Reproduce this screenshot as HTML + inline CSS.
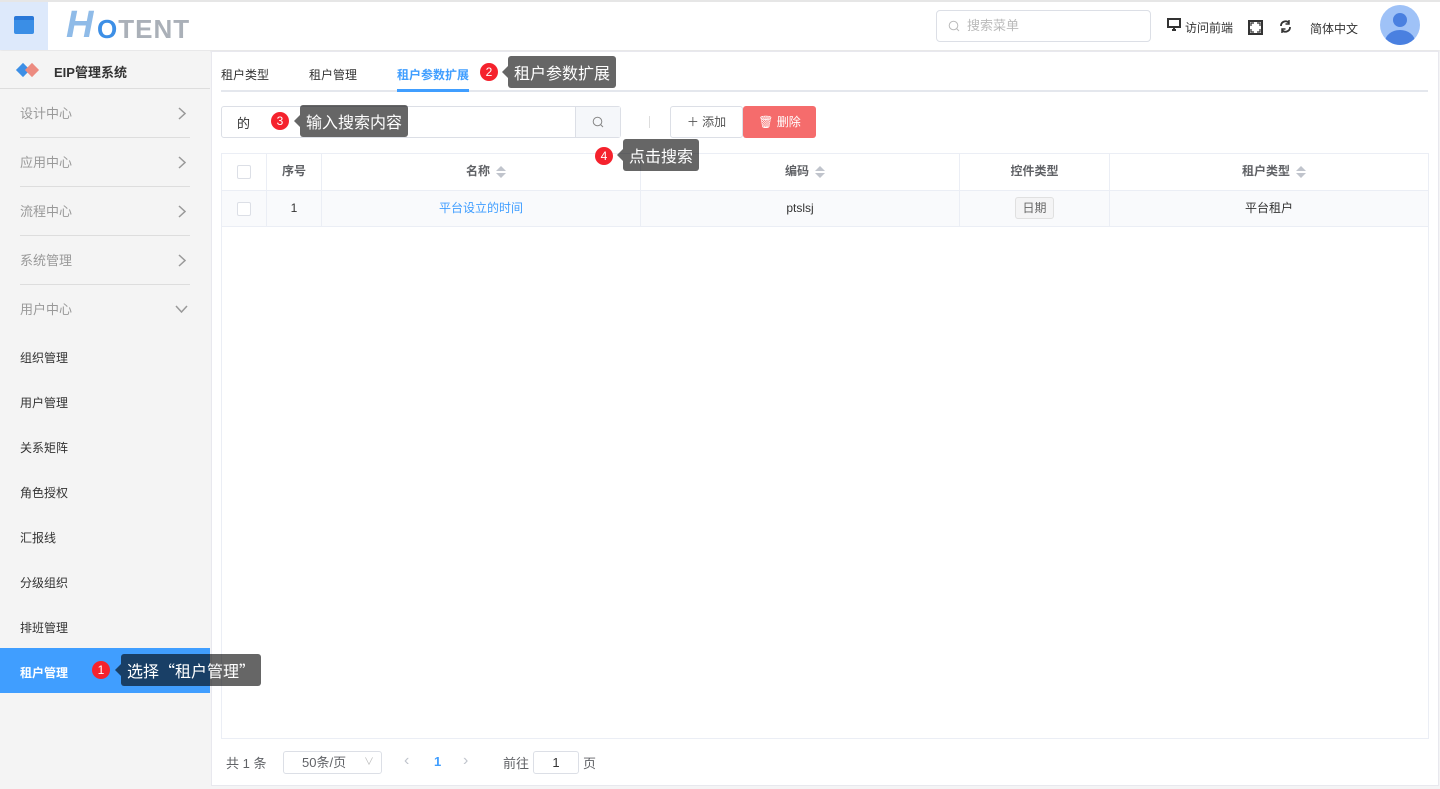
<!DOCTYPE html>
<html><head><meta charset="utf-8"><style>
*{box-sizing:border-box;margin:0;padding:0}
body{width:1440px;height:789px;overflow:hidden;background:#f4f4f5;font-family:"Liberation Sans","Noto Sans CJK SC",sans-serif;font-size:12px;color:#333;position:relative}
.abs{position:absolute}
.hdr{left:0;top:0;width:1440px;height:50px;background:#fff;border-top:2px solid #e6e6e6;box-shadow:0 1px 3px rgba(0,0,0,.08)}
.side{left:0;top:51px;width:210px;height:738px;background:#f4f4f4}
.mi{position:absolute;left:20px;width:170px;height:49px;border-bottom:1px solid #ddd;color:#999;font-size:13px;line-height:49px}
.mi svg{position:absolute;right:4px;top:18px}
.si{position:absolute;left:20px;font-size:12px;color:#333}
.card{left:211px;top:51px;width:1228px;height:735px;background:#fff;border:1px solid #e8e8ee}
.tip{background:rgba(0,0,0,.6);color:#fff;font-family:"Noto Sans CJK SC",sans-serif;font-size:16px;height:32px;line-height:32px;padding:0 6px;border-radius:3px;white-space:nowrap}
.tip:before{content:"";position:absolute;left:-6px;top:10px;border:6px solid transparent;border-left:0;border-right-color:rgba(0,0,0,.6)}
.badge{width:18px;height:18px;border-radius:50%;background:#f5222d;color:#fff;font-size:12px;text-align:center;line-height:18px}
.th{position:absolute;top:153px;height:37px;line-height:37px;text-align:center;font-weight:bold;color:#606266;border-right:1px solid #ebeef5}
.td{position:absolute;top:190px;height:37px;line-height:37px;text-align:center;color:#333;border-right:1px solid #ebeef5}
.sort{display:inline-block;vertical-align:middle;margin-left:6px;width:0;height:12px;position:relative}
.sort:before{content:"";position:absolute;left:0;top:0;border:5px solid transparent;border-top:0;border-bottom-color:#c0c4cc}
.sort:after{content:"";position:absolute;left:0;top:7px;border:5px solid transparent;border-bottom:0;border-top-color:#c0c4cc}
</style></head><body>
<div class="abs hdr">
 <div class="abs" style="left:0;top:0;width:48px;height:48px;background:#dde9fb"></div>
 <div class="abs" style="left:14px;top:14px;width:20px;height:18px;background:#3a8ee6;border-radius:2px;border-top:4px solid #2a78d8"></div>
 <div class="abs" style="left:66px;top:4px;font-size:38px;font-weight:bold;color:#8fbbe8;font-style:italic;line-height:38px">H</div>
 <div class="abs" style="left:97px;top:12px;font-size:26px;font-weight:bold;line-height:30px;letter-spacing:1px"><span style="color:#3d8fe6">O</span><span style="color:#aab0b8">TENT</span></div>
 <div class="abs" style="left:936px;top:8px;width:215px;height:32px;border:1px solid #dcdfe6;border-radius:4px;color:#bbb;font-size:13px;line-height:30px;padding-left:30px">搜索菜单
  <svg class="abs" style="left:11px;top:9px" width="12" height="12" viewBox="0 0 12 12"><circle cx="5.5" cy="5.5" r="4.3" fill="none" stroke="#bbb"/><path d="M8.6 8.6l2.4 2.4" stroke="#bbb"/></svg></div>
 <svg class="abs" style="left:1167px;top:16px" width="14" height="13" viewBox="0 0 14 13"><rect x="1" y="1" width="12" height="8" fill="none" stroke="#333" stroke-width="2"/><path d="M5 12h4M7 9v3" stroke="#333" stroke-width="2"/></svg>
 <div class="abs" style="left:1185px;top:17px;font-size:12px">访问前端</div>
 <svg class="abs" style="left:1248px;top:18px" width="15" height="15" viewBox="0 0 15 15"><rect x="1" y="1" width="13" height="13" fill="none" stroke="#333" stroke-width="2"/><path d="M3 6V3h3M9 3h3v3M12 9v3H9M6 12H3V9" fill="none" stroke="#333" stroke-width="1.2"/></svg>
 <svg class="abs" style="left:1279px;top:18px" width="13" height="13" viewBox="0 0 13 13"><path d="M2 6a4.5 4.5 0 0 1 8-3M11 7a4.5 4.5 0 0 1-8 3" fill="none" stroke="#333" stroke-width="1.8"/><path d="M10 0v4H6.5M3 13V9h3.5" fill="none" stroke="#333" stroke-width="1.5"/></svg>
 <div class="abs" style="left:1310px;top:18px;font-size:12px">简体中文</div>
 <div class="abs" style="left:1380px;top:3px;width:40px;height:40px;border-radius:50%;background:#9fc2f7;overflow:hidden">
  <div class="abs" style="left:13px;top:8px;width:14px;height:14px;border-radius:50%;background:#4a80e0"></div>
  <div class="abs" style="left:5px;top:25px;width:30px;height:24px;border-radius:50%;background:#4a80e0"></div></div>
</div>
<div class="abs side">
 <div class="abs" style="left:18px;top:14px;width:10px;height:10px;background:#3d8fe6;transform:rotate(45deg)"></div>
 <div class="abs" style="left:27px;top:14px;width:10px;height:10px;background:#ec8b80;transform:rotate(45deg)"></div>
 <div class="abs" style="left:54px;top:11px;font-size:13px;font-weight:bold;color:#333">EIP管理系统</div>
 <div class="abs" style="left:0;top:37px;width:210px;border-top:1px solid #ddd"></div>
 <div class="mi" style="top:38px">设计中心<svg width="8" height="13" viewBox="0 0 8 13"><path d="M1 1l6 5.5L1 12" fill="none" stroke="#999" stroke-width="1.5"/></svg></div>
 <div class="mi" style="top:87px">应用中心<svg width="8" height="13" viewBox="0 0 8 13"><path d="M1 1l6 5.5L1 12" fill="none" stroke="#999" stroke-width="1.5"/></svg></div>
 <div class="mi" style="top:136px">流程中心<svg width="8" height="13" viewBox="0 0 8 13"><path d="M1 1l6 5.5L1 12" fill="none" stroke="#999" stroke-width="1.5"/></svg></div>
 <div class="mi" style="top:185px">系统管理<svg width="8" height="13" viewBox="0 0 8 13"><path d="M1 1l6 5.5L1 12" fill="none" stroke="#999" stroke-width="1.5"/></svg></div>
 <div class="mi" style="top:234px;border:0">用户中心<svg style="top:20px;right:2px" width="13" height="8" viewBox="0 0 13 8"><path d="M1 1l5.5 6L12 1" fill="none" stroke="#999" stroke-width="1.5"/></svg></div>
 <div class="si" style="top:298px">组织管理</div>
 <div class="si" style="top:343px">用户管理</div>
 <div class="si" style="top:388px">关系矩阵</div>
 <div class="si" style="top:433px">角色授权</div>
 <div class="si" style="top:478px">汇报线</div>
 <div class="si" style="top:523px">分级组织</div>
 <div class="si" style="top:568px">排班管理</div>
 <div class="abs" style="left:0;top:597px;width:210px;height:45px;background:#409eff"></div>
 <div class="si" style="top:613px;color:#fff;font-weight:bold">租户管理</div>
</div>
<div class="abs card"></div>
<div class="abs" style="left:221px;top:66px;font-size:12px">租户类型</div>
<div class="abs" style="left:309px;top:66px;font-size:12px">租户管理</div>
<div class="abs" style="left:397px;top:66px;font-size:12px;color:#409eff;font-weight:bold">租户参数扩展</div>
<div class="abs" style="left:221px;top:90px;width:1207px;height:2px;background:#e4e7ed"></div>
<div class="abs" style="left:397px;top:89px;width:72px;height:3px;background:#409eff"></div>
<div class="abs" style="left:221px;top:106px;width:400px;height:32px;border:1px solid #dcdfe6;border-radius:3px"></div>
<div class="abs" style="left:575px;top:107px;width:45px;height:30px;background:#f5f7fa;border-left:1px solid #dcdfe6"></div>
<svg class="abs" style="left:592px;top:116px" width="12" height="12" viewBox="0 0 12 12"><circle cx="5.5" cy="5.5" r="4.3" fill="none" stroke="#888"/><path d="M8.6 8.6l2.4 2.4" stroke="#888"/></svg>
<div class="abs" style="left:237px;top:113px;font-size:13px">的</div>
<div class="abs" style="left:649px;top:116px;width:1px;height:12px;background:#ddd"></div>
<div class="abs" style="left:670px;top:106px;width:73px;height:32px;border:1px solid #dcdfe6;border-radius:3px;line-height:30px;text-align:center;color:#555">＋ 添加</div>
<div class="abs" style="left:743px;top:106px;width:73px;height:32px;background:#f56c6c;border-radius:3px;line-height:32px;text-align:center;color:#fff">🗑 删除</div>
<div class="abs" style="left:221px;top:153px;width:1208px;height:586px;border:1px solid #ebeef5"></div>
<div class="abs" style="left:222px;top:190px;width:1206px;height:37px;background:#f9fafc;border-top:1px solid #ebeef5;border-bottom:1px solid #ebeef5"></div>
<div class="th" style="left:222px;width:45px"><span style="display:inline-block;width:14px;height:14px;border:1px solid #dcdfe6;border-radius:2px;vertical-align:middle;background:#fff"></span></div>
<div class="th" style="left:267px;width:55px">序号</div>
<div class="th" style="left:322px;width:319px">名称<span class="sort"></span></div>
<div class="th" style="left:641px;width:319px">编码<span class="sort"></span></div>
<div class="th" style="left:960px;width:150px">控件类型</div>
<div class="th" style="left:1110px;width:318px;border:0">租户类型<span class="sort"></span></div>
<div class="td" style="left:222px;width:45px"><span style="display:inline-block;width:14px;height:14px;border:1px solid #dcdfe6;border-radius:2px;vertical-align:middle;background:#fff"></span></div>
<div class="td" style="left:267px;width:55px">1</div>
<div class="td" style="left:322px;width:319px;color:#409eff">平台设立的时间</div>
<div class="td" style="left:641px;width:319px">ptslsj</div>
<div class="td" style="left:960px;width:150px"><span style="display:inline-block;height:22px;line-height:20px;padding:0 6px;border:1px solid #e0e0e0;background:#f4f4f5;border-radius:3px;color:#666">日期</span></div>
<div class="td" style="left:1110px;width:318px;border:0">平台租户</div>
<div class="abs" style="left:226px;top:753px;font-size:13px;color:#606266">共 1 条</div>
<div class="abs" style="left:283px;top:751px;width:99px;height:23px;border:1px solid #dcdfe6;border-radius:3px;font-size:13px;line-height:21px;padding-left:18px;color:#606266">50条/页<span style="position:absolute;right:7px;color:#bbb;font-size:10px">∨</span></div>
<div class="abs" style="left:404px;top:752px;font-size:16px;color:#c0c4cc">‹</div>
<div class="abs" style="left:434px;top:754px;font-size:13px;color:#409eff;font-weight:bold">1</div>
<div class="abs" style="left:463px;top:752px;font-size:16px;color:#c0c4cc">›</div>
<div class="abs" style="left:503px;top:753px;font-size:13px;color:#606266">前往</div>
<div class="abs" style="left:533px;top:751px;width:46px;height:23px;border:1px solid #dcdfe6;border-radius:3px;text-align:center;line-height:21px;font-size:13px">1</div>
<div class="abs" style="left:583px;top:753px;font-size:13px;color:#606266">页</div>
<div class="abs badge" style="left:92px;top:661px">1</div>
<div class="abs tip" style="left:121px;top:654px">选择“租户管理”</div>
<div class="abs badge" style="left:480px;top:63px">2</div>
<div class="abs tip" style="left:508px;top:56px">租户参数扩展</div>
<div class="abs badge" style="left:271px;top:112px">3</div>
<div class="abs tip" style="left:300px;top:105px">输入搜索内容</div>
<div class="abs badge" style="left:595px;top:147px">4</div>
<div class="abs tip" style="left:623px;top:139px">点击搜索</div>
</body></html>
